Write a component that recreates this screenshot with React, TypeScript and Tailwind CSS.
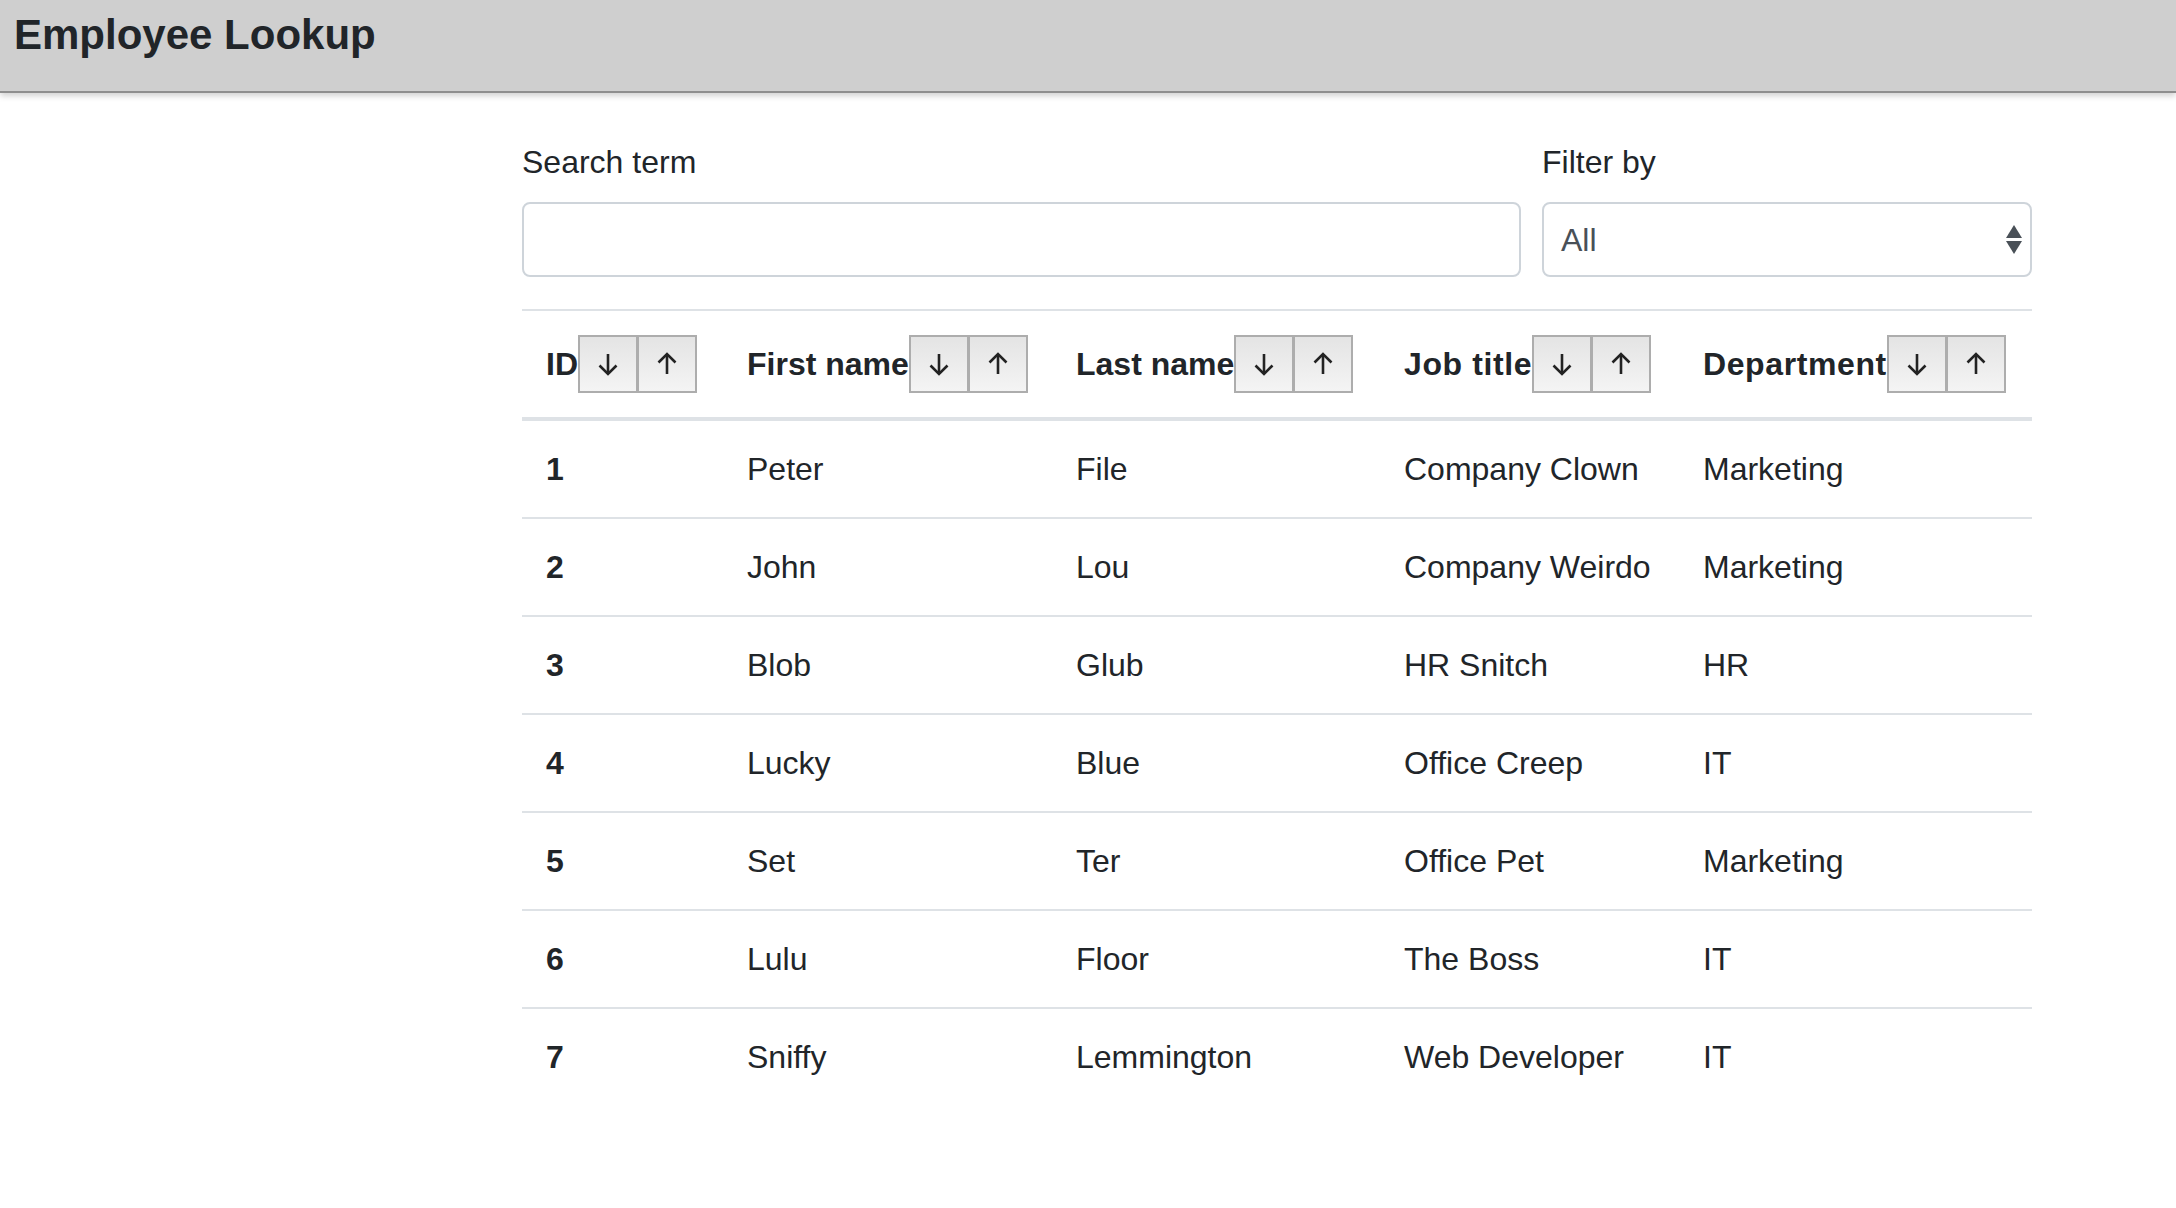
import React from "react";

const rows = [
  { id: 1, first: "Peter", last: "File", job: "Company Clown", dept: "Marketing" },
  { id: 2, first: "John", last: "Lou", job: "Company Weirdo", dept: "Marketing" },
  { id: 3, first: "Blob", last: "Glub", job: "HR Snitch", dept: "HR" },
  { id: 4, first: "Lucky", last: "Blue", job: "Office Creep", dept: "IT" },
  { id: 5, first: "Set", last: "Ter", job: "Office Pet", dept: "Marketing" },
  { id: 6, first: "Lulu", last: "Floor", job: "The Boss", dept: "IT" },
  { id: 7, first: "Sniffy", last: "Lemmington", job: "Web Developer", dept: "IT" },
];

const cols = "grid grid-cols-[201px_329px_328px_299px_353px]";

function DownArrow() {
  return (
    <svg width="22" height="24" viewBox="0 0 22 24" fill="none" stroke="#222" strokeWidth="2.6" strokeLinecap="butt">
      <line x1="11" y1="2" x2="11" y2="22" />
      <polyline points="2.5,13.5 11,22 19.5,13.5" />
    </svg>
  );
}

function UpArrow() {
  return (
    <svg width="22" height="24" viewBox="0 0 22 24" fill="none" stroke="#222" strokeWidth="2.6" strokeLinecap="butt">
      <line x1="11" y1="2" x2="11" y2="22" />
      <polyline points="2.5,10.5 11,2 19.5,10.5" />
    </svg>
  );
}

function SortButtons() {
  return (
    <div className="flex">
      <button className="w-[60px] h-[58px] border-2 border-[#adadad] bg-linear-to-b from-[#e4e4e4] to-[#f4f4f4] flex items-center justify-center">
        <DownArrow />
      </button>
      <button className="w-[60px] h-[58px] -ml-px border-2 border-[#adadad] bg-linear-to-b from-[#e4e4e4] to-[#f4f4f4] flex items-center justify-center">
        <UpArrow />
      </button>
    </div>
  );
}

function Th({ label, track }: { label: string; track?: boolean }) {
  return (
    <div className="px-[24px] py-[24px] flex items-center">
      <span className={`font-bold whitespace-nowrap ${track ? "tracking-[0.6px]" : ""}`}>{label}</span>
      <SortButtons />
    </div>
  );
}

export default function App() {
  return (
    <div
      className="min-h-[1208px] bg-white text-[#212529]"
      style={{ fontFamily: '"Liberation Sans", Arial, sans-serif' }}
    >
      <header className="h-[93px] bg-[#cfcfcf] border-b-2 border-[#8e8e8e] shadow-[0_3px_6px_rgba(0,0,0,0.18)] pl-[14px] pt-[9px]">
        <h1 className="text-[42px] leading-[52px] font-bold text-[#212529]">Employee Lookup</h1>
      </header>

      <main className="pl-[522px] pt-[45px]">
        <div className="w-[1510px]">
          <div className="flex gap-[21px] text-[32px] leading-[48px]">
            <div className="w-[999px] flex flex-col">
              <label className="mb-[16px]">Search term</label>
              <input
                type="text"
                className="h-[75px] w-full border-2 border-[#ced4da] rounded-[8px] px-[24px] outline-none"
              />
            </div>
            <div className="w-[490px] flex flex-col">
              <label className="mb-[16px]">Filter by</label>
              <div className="h-[75px] w-full border-2 border-[#ced4da] rounded-[8px] pl-[17px] pr-[8px] flex items-center justify-between text-[#495057]">
                <span>All</span>
                <svg width="16" height="29" viewBox="0 0 16 29" fill="#495057">
                  <polygon points="8,0 16,13 0,13" />
                  <polygon points="0,16 16,16 8,29" />
                </svg>
              </div>
            </div>
          </div>

          <div className="mt-[32px] text-[32px] leading-[48px]">
            <div className={`${cols} border-t-2 border-b-4 border-[#dee2e6]`}>
              <Th label="ID" />
              <Th label="First name" />
              <Th label="Last name" />
              <Th label="Job title" track />
              <Th label="Department" track />
            </div>
            {rows.map((r, i) => (
              <div
                key={r.id}
                className={`${cols} ${i > 0 ? "border-t-2 border-[#dee2e6]" : ""}`}
              >
                <div className="p-[24px] font-bold">{r.id}</div>
                <div className="p-[24px]">{r.first}</div>
                <div className="p-[24px]">{r.last}</div>
                <div className="p-[24px] whitespace-nowrap">{r.job}</div>
                <div className="p-[24px]">{r.dept}</div>
              </div>
            ))}
          </div>
        </div>
      </main>
    </div>
  );
}
